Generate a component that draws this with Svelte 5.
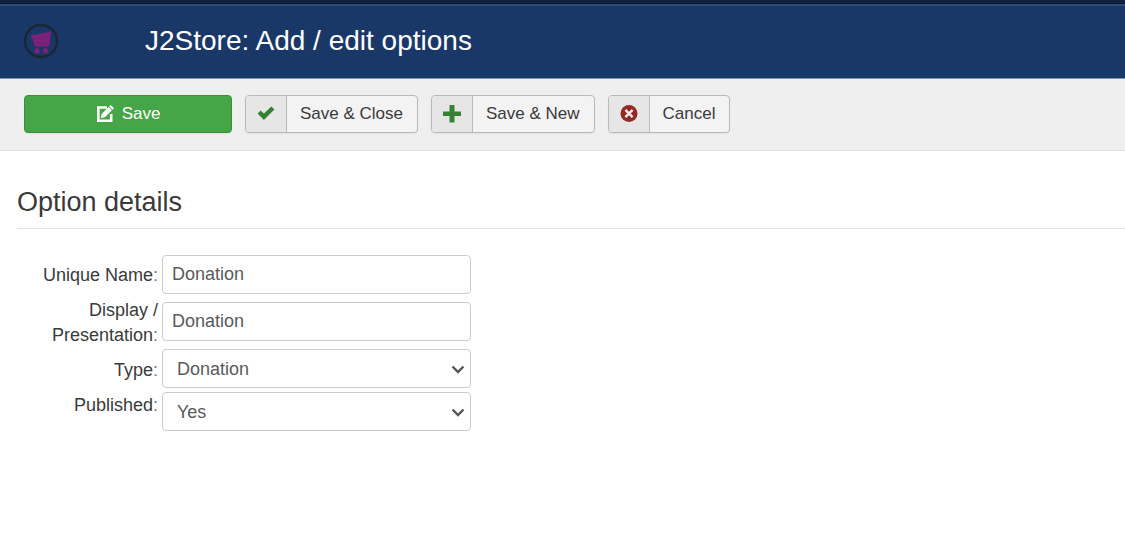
<script>
  let uniqueName = $state('Donation');
  let displayName = $state('Donation');
  let type = $state('Donation');
  let published = $state('Yes');
</script>

<div class="topbar"></div>

<header>
  <svg class="logo" viewBox="0 0 36 36" aria-hidden="true">
    <circle cx="18" cy="18" r="16" fill="none" stroke="#1b2534" stroke-width="2.4" />
    <path d="M8 12.5 10.5 11.5 11.6 12 27.8 8.5 26.6 22 25 23.5H12L11 21.5 9.8 16 8.3 15.6Z" fill="#84207a" />
    <path d="M10.5 16 26.5 13.5M11 20H26M15 12 16 22.5M19 11V22.5M23 10 22.5 22.5" stroke="#5f2872" stroke-width=".7" fill="none" />
    <circle cx="14" cy="27.7" r="2.5" fill="#84207a" />
    <circle cx="22.5" cy="27.7" r="2.5" fill="#84207a" />
  </svg>
  <h1>J2Store: Add / edit options</h1>
</header>

<div class="toolbar">
  <button type="button" class="btn save">
    <svg width="18" height="18" viewBox="0 0 18 18" aria-hidden="true">
      <path d="M11 2.5H2.3V15.7H15.2V9" fill="none" stroke="#fff" stroke-width="2.6" />
      <path d="M4.8 13.2 5.6 8.9 12.6 2 15.9 5.2 9.2 12Z" fill="#fff" />
      <path d="M13.2 1.5 14.7 0 18 3.2 16.5 4.7Z" fill="#fff" />
    </svg>
    <span>Save</span>
  </button>
  <button type="button" class="btn">
    <span class="icon">
      <svg width="18" height="18" viewBox="0 0 18 18" aria-hidden="true">
        <path d="M0.6 8.4 3.6 5.4 6.9 8.6 14.4 1.6 17.4 4.6 6.9 15Z" fill="#378137" />
      </svg>
    </span>
    <span class="text">Save &amp; Close</span>
  </button>
  <button type="button" class="btn">
    <span class="icon">
      <svg width="18" height="18" viewBox="0 0 18 18" aria-hidden="true">
        <path d="M6.5 0H11.5V6.5H18V11H11.5V17.5H6.5V11H0V6.5H6.5Z" fill="#378137" />
      </svg>
    </span>
    <span class="text">Save &amp; New</span>
  </button>
  <button type="button" class="btn">
    <span class="icon">
      <svg width="18" height="18" viewBox="0 0 18 18" aria-hidden="true">
        <circle cx="9" cy="8.5" r="8.5" fill="#942a25" />
        <path d="M5.4 4.9 12.6 12.1M12.6 4.9 5.4 12.1" stroke="#eee" stroke-width="2.4" />
      </svg>
    </span>
    <span class="text">Cancel</span>
  </button>
</div>

<main>
  <h2>Option details</h2>
  <form>
    <div class="labels">
      <label for="unique-name">Unique Name<i>:</i></label>
      <label for="display-name">Display / Presentation<i>:</i></label>
      <label for="type">Type<i>:</i></label>
      <label for="published">Published<i>:</i></label>
    </div>
    <div class="fields">
      <input id="unique-name" type="text" bind:value={uniqueName} />
      <input id="display-name" type="text" bind:value={displayName} />
      <div class="selects">
        <div class="select">
          <select id="type" bind:value={type}>
            <option>Donation</option>
          </select>
          <svg width="14" height="9" viewBox="0 0 14 9" aria-hidden="true">
            <path d="M1.5 1.5 7 7 12.5 1.5" fill="none" stroke="#555" stroke-width="2.4" />
          </svg>
        </div>
        <div class="select">
          <select id="published" bind:value={published}>
            <option>Yes</option>
            <option>No</option>
          </select>
          <svg width="14" height="9" viewBox="0 0 14 9" aria-hidden="true">
            <path d="M1.5 1.5 7 7 12.5 1.5" fill="none" stroke="#555" stroke-width="2.4" />
          </svg>
        </div>
      </div>
    </div>
  </form>
</main>

<style>
  :global(body) {
    background: #fff;
    color: #3a3a3a;
    font: 18px/25px "Liberation Sans", Arial, sans-serif;
  }

  .topbar {
    box-sizing: border-box;
    height: 4px;
    background: #10223e;
    border-bottom: 1px solid #0b1730;
  }

  header {
    display: flex;
    align-items: center;
    gap: 86px;
    box-sizing: border-box;
    height: 75px;
    padding: 0 23px 2px;
    background: #1a3867;
    border-top: 2px solid #2f4a73;
    border-bottom: 1px solid #8292ac;
  }

  .logo {
    width: 36px;
    height: 36px;
  }

  h1 {
    margin: 0;
    color: #fff;
    font-size: 28px;
    font-weight: 400;
    line-height: 34px;
  }

  .toolbar {
    display: flex;
    flex-wrap: wrap;
    gap: 13px;
    padding: 16px 24px 17px;
    background: #efefef;
    border-bottom: 1px solid #e2e2e2;
  }

  .btn {
    display: flex;
    align-items: stretch;
    box-sizing: border-box;
    height: 38px;
    padding: 0;
    overflow: hidden;
    color: #3a3a3a;
    font: 17px/36px "Liberation Sans", Arial, sans-serif;
    background: #f3f3f3;
    border: 1px solid #b9b9b9;
    border-radius: 4px;
    box-shadow: 0 1px 2px rgba(0, 0, 0, 0.06);
  }

  .save {
    align-items: center;
    justify-content: center;
    gap: 8px;
    width: 208px;
    color: #fff;
    background: #46a546;
    border-color: #3c903c;
  }

  .icon {
    display: flex;
    align-items: center;
    justify-content: center;
    width: 40px;
    background: #e6e6e6;
    border-right: 1px solid #b9b9b9;
  }

  .text {
    padding: 0 14px 0 13px;
  }

  main {
    padding: 33px 0 24px 17px;
  }

  h2 {
    margin: 0;
    padding-bottom: 8px;
    font-size: 27px;
    font-weight: 400;
    line-height: 36px;
    border-bottom: 1px solid #e5e5e5;
  }

  form {
    display: flex;
    gap: 4px;
    padding-top: 26px;
  }

  .labels {
    display: flex;
    flex-direction: column;
    gap: 10px;
    width: 141px;
    padding-top: 8px;
    text-align: right;
  }

  label i {
    color: #777;
    font-style: normal;
  }

  .fields {
    display: flex;
    flex-direction: column;
    gap: 8px;
    width: 309px;
  }

  .selects {
    display: flex;
    flex-direction: column;
    gap: 4px;
  }

  input,
  select {
    box-sizing: border-box;
    width: 100%;
    height: 39px;
    padding: 0 9px;
    color: #5a5a5a;
    font: 18px/25px "Liberation Sans", Arial, sans-serif;
    background: #fff;
    border: 1px solid #ccc;
    border-radius: 4px;
  }

  .select {
    position: relative;
    display: flex;
  }

  select {
    padding: 2px 14px 0;
    appearance: none;
  }

  .select svg {
    position: absolute;
    top: 16px;
    right: 6px;
    pointer-events: none;
  }
</style>
